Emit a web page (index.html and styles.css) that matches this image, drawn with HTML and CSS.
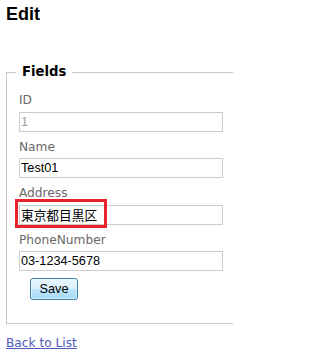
FILE: index.html
```html
<!DOCTYPE html>
<html>
<head>
<meta charset="utf-8">
<title>Edit</title>
<link rel="stylesheet" href="styles.css">
</head>
<body>
<div class="page">
  <h2 class="title">Edit</h2>
  <fieldset class="fields">
    <legend class="legend">Fields</legend>
    <div class="group">
      <div class="label">ID</div>
      <input class="box box-disabled" type="text" value="1" disabled>
    </div>
    <div class="group">
      <div class="label">Name</div>
      <input class="box" type="text" value="Test01">
    </div>
    <div class="group">
      <div class="label">Address</div>
      <div class="wrap">
        <input class="box box-inwrap" type="text" value="東京都目黒区">
        <span class="mark"></span>
      </div>
    </div>
    <div class="group">
      <div class="label">PhoneNumber</div>
      <input class="box" type="text" value="03-1234-5678">
    </div>
    <div class="actions">
      <button class="save" type="button">Save</button>
    </div>
  </fieldset>
  <a class="back" href="#">Back to List</a>
</div>
</body>
</html>
```

FILE: styles.css
```css
html, body {
  margin: 0;
  padding: 0;
  background: #fff;
}
body {
  overflow: hidden;
  font-family: "DejaVu Sans", Verdana, sans-serif;
  font-size: 12.2px;
  color: #696969;
}
.page {
  width: 233px;
  height: 356px;
  box-sizing: border-box;
  padding: 4px 0 0 6px;
  overflow: hidden;
}
.title {
  margin: 0;
  font: bold 18px/20px "Liberation Sans", Arial, sans-serif;
  color: #000;
}
.fields {
  width: 257px;
  box-sizing: border-box;
  margin: 40px 0 0 0;
  padding: 12px 12px 23px 12px;
  border: 1px solid #c8c8c8;
  min-width: 0;
}
.legend {
  margin-left: -3px;
  padding: 0 6px;
  font: bold 13.2px/16px "DejaVu Sans", Verdana, sans-serif;
  color: #000;
}
.group {
  margin-bottom: 7px;
}
.label {
  line-height: 16px;
}
.box {
  display: block;
  box-sizing: border-box;
  width: 204px;
  height: 20px;
  margin: 3.5px 0 0 0;
  padding: 0 1px;
  border: 1px solid #ccc;
  border-radius: 0;
  background: #fff;
  color: #000;
  font: 12.7px "Liberation Sans", Arial, "Noto Sans CJK JP", sans-serif;
  outline: none;
}
.box-disabled {
  color: #a0a0a0;
  background: #fff;
  -webkit-text-fill-color: #a0a0a0;
}
.wrap {
  position: relative;
  margin-top: 3.5px;
}
.box-inwrap {
  margin-top: 0;
}
.mark {
  position: absolute;
  left: -4px;
  top: -6px;
  width: 92px;
  height: 29px;
  box-sizing: border-box;
  border: 3px solid #e8232b;
}
.actions {
  display: flex;
}
.save {
  margin-left: 11px;
  width: 48px;
  height: 22px;
  box-sizing: border-box;
  padding: 0;
  border: 1px solid #3c7fb1;
  border-radius: 3px;
  background: linear-gradient(#eaf6fd 0%, #d9f0fc 50%, #bee6fd 50%, #a7d9f5 100%);
  box-shadow: inset 0 0 0 1px rgba(255, 255, 255, 0.55);
  font: 12.7px "Liberation Sans", Arial, sans-serif;
  color: #000;
}
.back {
  display: block;
  width: max-content;
  margin-top: 11px;
  line-height: 16px;
  color: #505abc;
  text-decoration: underline;
}
```
